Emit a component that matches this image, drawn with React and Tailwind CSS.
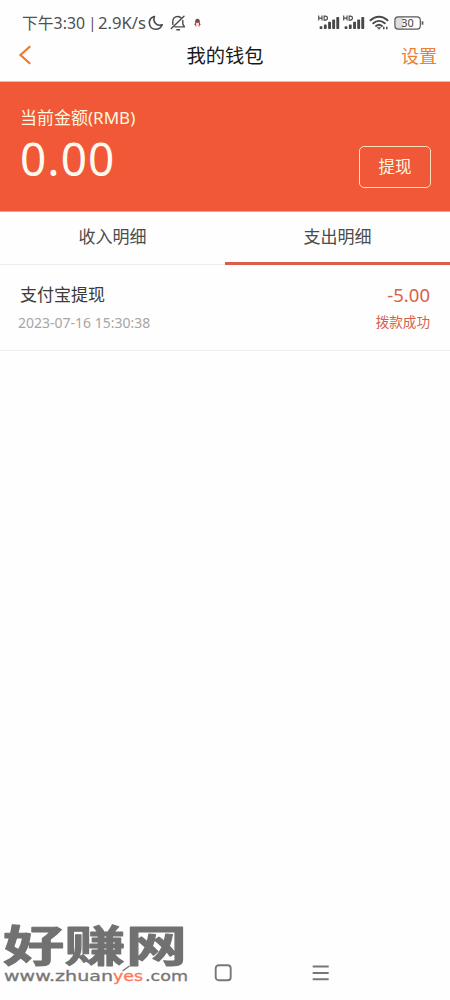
import React from "react";

const sans = "font-['Noto_Sans','Noto_Sans_CJK_SC',sans-serif]";

function Signal() {
  return (
    <svg className="block h-4 w-[22px] shrink-0" viewBox="0 0 22 16" fill="#48484a">
      <path d="M.7 .6v5M4 .6v5M.7 3.100h3.300M6.100 1.100v4h1.200c2.900 0 2.900-4 0-4z" fill="none" stroke="#48484a" strokeWidth="1.100" />
      <rect x="1.6" y="11.2" width="2.800" height="2.8" rx=".7" />
      <rect x="5.900" y="9.4" width="2.800" height="4.6" rx=".7" />
      <rect x="10.1" y="6.800" width="2.900" height="7.200" rx=".7" />
      <rect x="14.2" y="4.4" width="2.900" height="9.6" rx=".7" />
      <rect x="18.3" y="2" width="2.900" height="12" rx=".7" />
    </svg>
  );
}

function StatusBar() {
  return (
    <div className="flex h-[37px] items-start pl-[22px] text-[#505052]">
      <div className="mt-[11px] flex h-6 w-[125px] shrink-0 items-center whitespace-nowrap">
        <svg className="block h-6 w-[125px]" viewBox="0 0 125 24" fill="#505052" fontSize="16.2">
          <text x="0" y="17.8" textLength="63" lengthAdjust="spacingAndGlyphs">下午3:30</text>
          <text x="66.500" y="16.6" fontSize="14">|</text>
          <text x="76" y="17.8" textLength="48" lengthAdjust="spacingAndGlyphs">2.9K/s</text>
        </svg>
      </div>
      <svg className="ml-[1px] mt-[15px] block h-4 w-4 shrink-0" viewBox="0 0 16 16" fill="none" stroke="#4a4a4c" strokeWidth="1.600" strokeLinejoin="round">
        <path d="M6.400 1.400C2.800 2.400 1 5.300 1.400 8.500c.4 3.400 3 5.700 6.300 5.700 3.100 0 5.400-1.500 6.500-4.500-2.700 1-5.200.4-6.800-1.500C5.800 6.300 5.500 3.900 6.400 1.400z" />
      </svg>
      <svg className="ml-[6px] mt-[15px] block h-4 w-4 shrink-0" viewBox="0 0 16 16" fill="none" stroke="#4a4a4c" strokeWidth="1.400" strokeLinecap="round" strokeLinejoin="round">
        <path d="M2.800 9.400V6.300C2.800 3.500 4.900 1.500 7.600 1.500c1.300 0 2.300.4 3.200 1.100M12.800 5.400v3.700l1.700 2.800H5M1.300 13.600 14 1.200M6.800 14.800h2.700" />
      </svg>
      <svg className="ml-[7px] mt-[18px] block h-[9px] w-[9px] shrink-0" viewBox="0 0 9 9">
        <path d="M2.200 5V3.400a2.300 2.600 0 0 1 4.600 0V5l1 1.800-1 .2H2.200l-1-.2z" fill="#635152" />
        <ellipse cx="4.500" cy="6" rx="1.600" ry="1.500" fill="#f2e8e4" />
        <path d="M2.500 4.500h4M2 7.800h1.700M5.300 7.800H7" stroke="#ce5b47" strokeWidth="1" />
      </svg>
      <div className="ml-[115.500px] mt-[15px] flex items-start">
        <Signal />
        <div className="ml-[3px]"><Signal /></div>
        <svg className="ml-[4px] block h-4 w-5" viewBox="0 0 20 16" fill="none" stroke="#48484a" strokeWidth="1.900" strokeLinecap="round">
          <path d="M1.500 5.300C6.500.5 13.500.5 18.500 5.300M4.200 8.300c3.500-3.100 8.100-3.100 11.600 0M7 11c1.800-1.500 4.200-1.500 6 0" />
          <path d="m8.300 12.600 1.700 1.800 1.700-1.800z" fill="#48484a" strokeWidth=".5" />
          <path d="M14.800 12.200v1.500M17.800 12.200v1.500" strokeWidth="1.500" />
        </svg>
        <svg className="ml-[5px] mt-px block h-[14px] w-[31px]" viewBox="0 0 31 14">
          <path d="M3.500 1h6v12h-6C1.900 13 1 12 1 10.400V3.600C1 2 1.900 1 3.500 1z" fill="#dedede" />
          <rect x=".9" y=".9" width="25.400" height="12.200" rx="3.300" fill="none" stroke="#58585a" strokeWidth="1.200" />
          <path d="M28.500 5.300v3.400" stroke="#58585a" strokeWidth="1.700" />
          <text x="7.300" y="10.700" fontSize="10.500" textLength="12.500" lengthAdjust="spacingAndGlyphs" fill="#444">30</text>
        </svg>
      </div>
    </div>
  );
}

function Header() {
  return (
    <header className="grid h-[45px] shrink-0 grid-cols-[1fr_auto_1fr] items-center border-b border-[#fbb98e]">
      <svg className="mb-[8px] ml-[18px] block h-5 w-[14px]" viewBox="0 0 14 20" fill="none" stroke="#e87b32" strokeWidth="2.200">
        <path d="M12.200 1.200 2.500 10l9.700 8.800" />
      </svg>
      <h1 className="mb-[7px] text-[19.300px] leading-6 text-[#191919]">我的钱包</h1>
      <button className="mb-[6px] mr-[13px] justify-self-end text-[18px] leading-6 text-[#e88136]">设置</button>
    </header>
  );
}

function Balance() {
  return (
    <section className="flex h-[129px] shrink-0 items-start justify-between bg-[#f05837] pl-5 pr-[19px] text-[#fff6df]">
      <div className="pt-[24px]">
        <div className="text-[17px] leading-6">当前金额(RMB)</div>
        <div className="mt-[2px] text-[46px] leading-[52px] tracking-[1px] text-[#fffaf0]">0.00</div>
      </div>
      <button className="mt-[64px] h-[42px] w-[72px] rounded-[5px] border-[1.500px] border-[#ffe0bd] text-[16.500px]">提现</button>
    </section>
  );
}

function Watermark() {
  return (
    <svg className="block h-[80px] w-[190px] overflow-visible" viewBox="0 0 190 80">
      <text x="3" y="48" fontSize="46" fontWeight="700" textLength="184" lengthAdjust="spacingAndGlyphs" transform="translate(0 2) scale(1 .95)" fill="#717171" stroke="#717171" strokeWidth="1" strokeLinejoin="round" fontFamily="'Noto Sans CJK SC',sans-serif">好赚网</text>
      <g fontFamily="'DejaVu Sans',sans-serif" fontSize="13.500" strokeWidth=".3">
        <text x="4" y="67" textLength="109" lengthAdjust="spacingAndGlyphs" fill="#777" stroke="#777">www.zhuan</text>
        <text x="113" y="67" textLength="30" lengthAdjust="spacingAndGlyphs" fill="#ff7657" stroke="#ff7657">yes</text>
        <text x="145" y="67" textLength="43" lengthAdjust="spacingAndGlyphs" fill="#777" stroke="#777">.com</text>
      </g>
      <path d="m122.500 57 7-5" stroke="#777" strokeWidth="1.500" />
    </svg>
  );
}

export default function App() {
  return (
    <div className={`flex h-[1000px] w-[450px] flex-col overflow-hidden bg-[#fefefe] ${sans}`}>
      <StatusBar />
      <Header />
      <Balance />
      <nav className="grid h-[54px] shrink-0 grid-cols-2 border-t border-[#e9a58f] text-[17px] text-[#4b4b4b]">
        <button className="border-b border-[#ededed] pb-[3px]">收入明细</button>
        <button className="border-b-[3px] border-[#db5c4a] pb-px">支出明细</button>
      </nav>
      <article className="flex h-[86px] shrink-0 items-start justify-between border-b border-[#ededed] pl-[18px] pr-[20px]">
        <div className="pt-[18px]">
          <div className="pl-[2px] text-[17px] leading-6 text-[#3b3b3b]">支付宝提现</div>
          <time className="mt-[6px] block text-[14px] leading-5 text-[#a6a6a6]">2023-07-16 15:30:38</time>
        </div>
        <div className="pt-[18px] text-right text-[#d8614c]">
          <div className="text-[18.500px] leading-6">-5.00</div>
          <div className="mt-[5px] text-[13.600px] leading-5">拨款成功</div>
        </div>
      </article>
      <footer className="mt-auto flex h-[86px] shrink-0 items-start">
        <Watermark />
        <svg className="ml-[24px] mt-[50px] block h-[18px] w-[18px]" viewBox="0 0 18 18" fill="none" stroke="#777" strokeWidth="1.900">
          <rect x="1.700" y="1.300" width="15" height="15" rx="3" />
        </svg>
        <svg className="ml-[80px] mt-[50px] block h-[18px] w-[17px]" viewBox="0 0 17 18" stroke="#777" strokeWidth="1.900">
          <path d="M.7 2.500h16M.7 9h16M.7 15.300h16" />
        </svg>
      </footer>
    </div>
  );
}
